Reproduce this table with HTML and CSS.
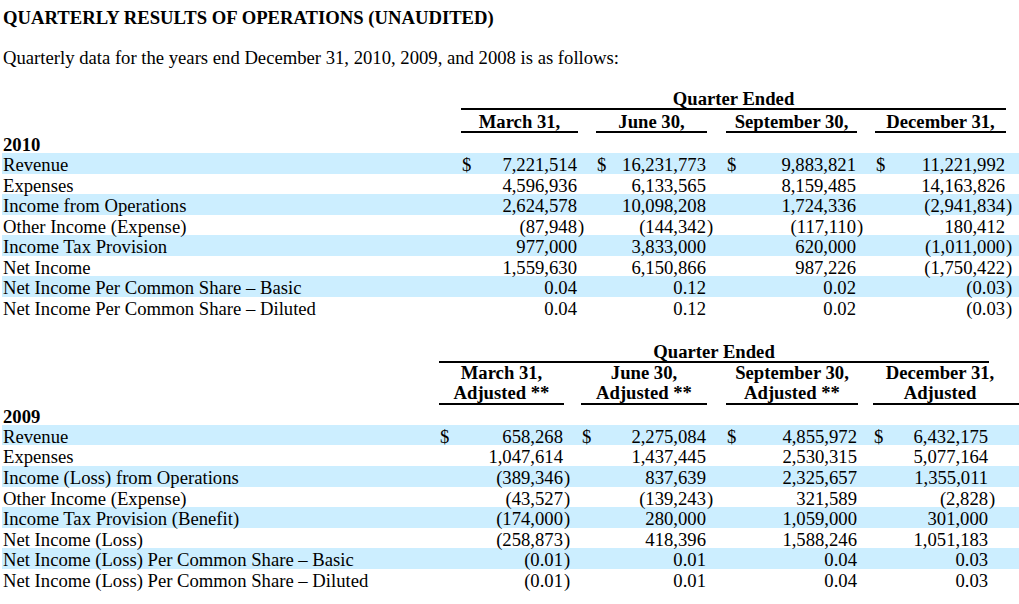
FILE: index.html
```html
<!DOCTYPE html>
<html lang="en">
<head>
<meta charset="utf-8">
<title>Quarterly Results of Operations (Unaudited)</title>
<link rel="stylesheet" href="styles.css">
</head>
<body>
<h1 class="title">QUARTERLY RESULTS OF OPERATIONS (UNAUDITED)</h1>
<p class="intro">Quarterly data for the years end December 31, 2010, 2009, and 2008 is as follows:</p>

<table class="fin t1">
  <colgroup>
    <col class="c-lbl"><col class="c-cur"><col class="c-v1"><col class="c-g1"><col class="c-cur"><col class="c-v2"><col class="c-g2"><col class="c-cur"><col class="c-v3"><col class="c-g3"><col class="c-cur"><col class="c-v4"><col class="c-tr">
  </colgroup>
  <tr class="group"><td></td><td class="rule" colspan="11">Quarter Ended</td><td></td></tr>
  <tr class="heads"><td></td><td class="h" colspan="2">March 31,</td><td></td><td class="h" colspan="2">June 30,</td><td></td><td class="h" colspan="2">September 30,</td><td></td><td class="h" colspan="2">December 31,</td><td></td></tr>
  <tr class="year"><td colspan="13">2010</td></tr>
  <tr class="data alt"><td class="lbl">Revenue</td><td class="cur">$</td><td class="num">7,221,514</td><td></td><td class="cur">$</td><td class="num">16,231,773</td><td></td><td class="cur">$</td><td class="num">9,883,821</td><td></td><td class="cur">$</td><td class="num">11,221,992</td><td></td></tr>
  <tr class="data"><td class="lbl">Expenses</td><td></td><td class="num">4,596,936</td><td></td><td></td><td class="num">6,133,565</td><td></td><td></td><td class="num">8,159,485</td><td></td><td></td><td class="num">14,163,826</td><td></td></tr>
  <tr class="data alt"><td class="lbl">Income from Operations</td><td></td><td class="num">2,624,578</td><td></td><td></td><td class="num">10,098,208</td><td></td><td></td><td class="num">1,724,336</td><td></td><td></td><td class="num">(2,941,834</td><td>)</td></tr>
  <tr class="data"><td class="lbl">Other Income (Expense)</td><td></td><td class="num">(87,948</td><td>)</td><td></td><td class="num">(144,342</td><td>)</td><td></td><td class="num">(117,110</td><td>)</td><td></td><td class="num">180,412</td><td></td></tr>
  <tr class="data alt"><td class="lbl">Income Tax Provision</td><td></td><td class="num">977,000</td><td></td><td></td><td class="num">3,833,000</td><td></td><td></td><td class="num">620,000</td><td></td><td></td><td class="num">(1,011,000</td><td>)</td></tr>
  <tr class="data"><td class="lbl">Net Income</td><td></td><td class="num">1,559,630</td><td></td><td></td><td class="num">6,150,866</td><td></td><td></td><td class="num">987,226</td><td></td><td></td><td class="num">(1,750,422</td><td>)</td></tr>
  <tr class="data alt"><td class="lbl">Net Income Per Common Share – Basic</td><td></td><td class="num">0.04</td><td></td><td></td><td class="num">0.12</td><td></td><td></td><td class="num">0.02</td><td></td><td></td><td class="num">(0.03</td><td>)</td></tr>
  <tr class="data"><td class="lbl">Net Income Per Common Share – Diluted</td><td></td><td class="num">0.04</td><td></td><td></td><td class="num">0.12</td><td></td><td></td><td class="num">0.02</td><td></td><td></td><td class="num">(0.03</td><td>)</td></tr>
</table>

<table class="fin t2">
  <colgroup>
    <col class="c-lbl"><col class="c-cur"><col class="c-v1"><col class="c-g1"><col class="c-cur"><col class="c-v2"><col class="c-g2"><col class="c-cur"><col class="c-v3"><col class="c-g3"><col class="c-cur"><col class="c-v4"><col class="c-g4"><col class="c-tr">
  </colgroup>
  <tr class="group"><td></td><td class="rule" colspan="11">Quarter Ended</td><td></td><td></td></tr>
  <tr class="heads two"><td></td><td class="h" colspan="2">March 31,<br>Adjusted **</td><td></td><td class="h" colspan="2">June 30,<br>Adjusted **</td><td></td><td class="h" colspan="2">September 30,<br>Adjusted **</td><td></td><td class="h" colspan="3">December 31,<br>Adjusted</td><td class="h"></td></tr>
  <tr class="year"><td colspan="14">2009</td></tr>
  <tr class="data alt"><td class="lbl">Revenue</td><td class="cur">$</td><td class="num">658,268</td><td></td><td class="cur">$</td><td class="num">2,275,084</td><td></td><td class="cur">$</td><td class="num">4,855,972</td><td></td><td class="cur">$</td><td class="num">6,432,175</td><td></td><td></td></tr>
  <tr class="data"><td class="lbl">Expenses</td><td></td><td class="num">1,047,614</td><td></td><td></td><td class="num">1,437,445</td><td></td><td></td><td class="num">2,530,315</td><td></td><td></td><td class="num">5,077,164</td><td></td><td></td></tr>
  <tr class="data alt"><td class="lbl">Income (Loss) from Operations</td><td></td><td class="num">(389,346</td><td>)</td><td></td><td class="num">837,639</td><td></td><td></td><td class="num">2,325,657</td><td></td><td></td><td class="num">1,355,011</td><td></td><td></td></tr>
  <tr class="data"><td class="lbl">Other Income (Expense)</td><td></td><td class="num">(43,527</td><td>)</td><td></td><td class="num">(139,243</td><td>)</td><td></td><td class="num">321,589</td><td></td><td></td><td class="num">(2,828</td><td>)</td><td></td></tr>
  <tr class="data alt"><td class="lbl">Income Tax Provision (Benefit)</td><td></td><td class="num">(174,000</td><td>)</td><td></td><td class="num">280,000</td><td></td><td></td><td class="num">1,059,000</td><td></td><td></td><td class="num">301,000</td><td></td><td></td></tr>
  <tr class="data"><td class="lbl">Net Income (Loss)</td><td></td><td class="num">(258,873</td><td>)</td><td></td><td class="num">418,396</td><td></td><td></td><td class="num">1,588,246</td><td></td><td></td><td class="num">1,051,183</td><td></td><td></td></tr>
  <tr class="data alt"><td class="lbl">Net Income (Loss) Per Common Share – Basic</td><td></td><td class="num">(0.01</td><td>)</td><td></td><td class="num">0.01</td><td></td><td></td><td class="num">0.04</td><td></td><td></td><td class="num">0.03</td><td></td><td></td></tr>
  <tr class="data"><td class="lbl">Net Income (Loss) Per Common Share – Diluted</td><td></td><td class="num">(0.01</td><td>)</td><td></td><td class="num">0.01</td><td></td><td></td><td class="num">0.04</td><td></td><td></td><td class="num">0.03</td><td></td><td></td></tr>
</table>
</body>
</html>
```

FILE: styles.css
```css
html, body {
  margin: 0;
  padding: 0;
  background: #fff;
}

body {
  font-family: "Liberation Serif", "Times New Roman", serif;
  font-size: 18.67px;
  color: #000;
  padding-bottom: 14px;
}

.title {
  margin: 8px 0 0 3px;
  font-size: 18.67px;
  font-weight: bold;
  line-height: 20px;
}

.intro {
  margin: 20px 0 0 3px;
  line-height: 20px;
}

.fin {
  margin-left: 2px;
  width: 1017px;
  table-layout: fixed;
  border-collapse: separate;
  border-spacing: 0;
}

.fin td {
  padding: 0;
  white-space: nowrap;
  vertical-align: bottom;
}

.t1 { margin-top: 20px; }
.t2 { margin-top: 23.4px; }

/* column widths, table 1 */
.t1 .c-lbl { width: 459px; }
.t1 .c-cur { width: 20px; }
.t1 .c-v1 { width: 97px; }
.t1 .c-g1 { width: 18px; }
.t1 .c-v2 { width: 91px; }
.t1 .c-g2 { width: 19px; }
.t1 .c-v3 { width: 111px; }
.t1 .c-g3 { width: 18px; }
.t1 .c-v4 { width: 111px; }
.t1 .c-tr { width: 13px; }

/* column widths, table 2 */
.t2 .c-lbl { width: 437px; }
.t2 .c-cur { width: 20px; }
.t2 .c-v1 { width: 105px; }
.t2 .c-g1 { width: 17px; }
.t2 .c-v2 { width: 106px; }
.t2 .c-g2 { width: 19px; }
.t2 .c-v3 { width: 112px; }
.t2 .c-g3 { width: 15px; }
.t2 .c-v4 { width: 96px; }
.t2 .c-g4 { width: 18px; }
.t2 .c-tr { width: 12px; }

.group td {
  padding-top: 2px;
  line-height: 18px;
}

.group .rule {
  border-bottom: 2px solid #000;
  text-align: center;
  font-weight: bold;
}

.heads td {
  padding-top: 3px;
  line-height: 18px;
}

.heads.two td {
  padding-top: 0;
  line-height: 20px;
}

.heads .h {
  border-bottom: 2px solid #000;
  text-align: center;
  font-weight: bold;
}

.year td {
  padding-top: 3px;
  line-height: 17px;
  font-weight: bold;
  padding-left: 1px;
}

.data td {
  padding-top: 3px;
  line-height: 17.57px;
}

.data.alt td {
  background: #cceeff;
}

.fin .lbl {
  padding-left: 1px;
}

.fin .cur {
  padding-left: 1px;
}

.fin .num {
  text-align: right;
  padding-right: 1px;
}
```
